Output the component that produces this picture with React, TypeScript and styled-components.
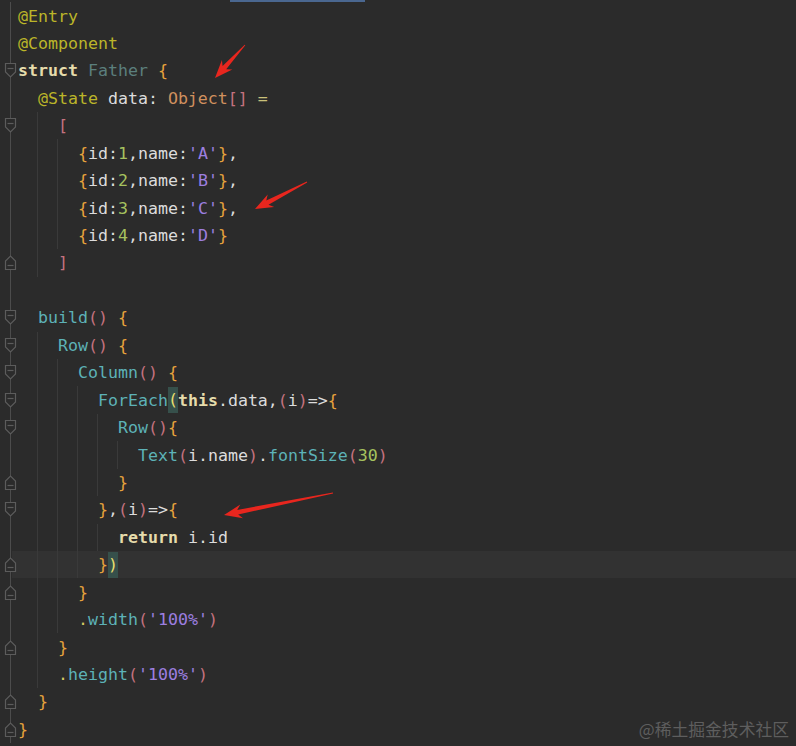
import React from "react";
import styled, { createGlobalStyle, css } from "styled-components";

const Global = createGlobalStyle`
  html, body { margin: 0; padding: 0; background: #2b2b2b; }
  body { overflow: hidden; }
`;

type Kind =
  | "ann" | "kw" | "cls" | "brace" | "plain" | "type" | "bracket"
  | "op" | "num" | "str" | "fn" | "dot" | "paren" | "match";

const colors: Record<Kind, string> = {
  ann: "#bbb529",
  kw: "#e6dcab",
  cls: "#5b7f7d",
  brace: "#e8a33d",
  plain: "#dcdcdc",
  type: "#d0905e",
  bracket: "#c4727f",
  op: "#c9c17a",
  num: "#a6c25f",
  str: "#9d7fe0",
  fn: "#5db2b7",
  dot: "#d6c862",
  paren: "#c4727f",
  match: "#e8df6e",
};

type Tok = [Kind, string];
type Fold = "open" | "close" | null;
interface LineDef { indent: number; toks: Tok[]; fold: Fold; current?: boolean }

const LINES: LineDef[] = [
  { indent: 0, fold: null, toks: [["ann", "@Entry"]] },
  { indent: 0, fold: null, toks: [["ann", "@Component"]] },
  { indent: 0, fold: "open", toks: [["kw", "struct"], ["plain", " "], ["cls", "Father"], ["plain", " "], ["brace", "{"]] },
  { indent: 2, fold: null, toks: [["ann", "@State"], ["plain", " data: "], ["type", "Object"], ["bracket", "[]"], ["plain", " "], ["op", "="]] },
  { indent: 4, fold: "open", toks: [["bracket", "["]] },
  { indent: 6, fold: null, toks: [["brace", "{"], ["plain", "id:"], ["num", "1"], ["plain", ",name:"], ["str", "'A'"], ["brace", "}"], ["plain", ","]] },
  { indent: 6, fold: null, toks: [["brace", "{"], ["plain", "id:"], ["num", "2"], ["plain", ",name:"], ["str", "'B'"], ["brace", "}"], ["plain", ","]] },
  { indent: 6, fold: null, toks: [["brace", "{"], ["plain", "id:"], ["num", "3"], ["plain", ",name:"], ["str", "'C'"], ["brace", "}"], ["plain", ","]] },
  { indent: 6, fold: null, toks: [["brace", "{"], ["plain", "id:"], ["num", "4"], ["plain", ",name:"], ["str", "'D'"], ["brace", "}"]] },
  { indent: 4, fold: "close", toks: [["bracket", "]"]] },
  { indent: 0, fold: null, toks: [] },
  { indent: 2, fold: "open", toks: [["fn", "build"], ["paren", "()"], ["plain", " "], ["brace", "{"]] },
  { indent: 4, fold: "open", toks: [["fn", "Row"], ["paren", "()"], ["plain", " "], ["brace", "{"]] },
  { indent: 6, fold: "open", toks: [["fn", "Column"], ["paren", "()"], ["plain", " "], ["brace", "{"]] },
  { indent: 8, fold: "open", toks: [["fn", "ForEach"], ["match", "("], ["kw", "this"], ["plain", ".data,"], ["paren", "("], ["plain", "i"], ["paren", ")"], ["plain", "=>"], ["brace", "{"]] },
  { indent: 10, fold: "open", toks: [["fn", "Row"], ["paren", "()"], ["brace", "{"]] },
  { indent: 12, fold: null, toks: [["fn", "Text"], ["paren", "("], ["plain", "i.name"], ["paren", ")"], ["plain", "."], ["fn", "fontSize"], ["paren", "("], ["num", "30"], ["paren", ")"]] },
  { indent: 10, fold: "close", toks: [["brace", "}"]] },
  { indent: 8, fold: "open", toks: [["brace", "}"], ["plain", ","], ["paren", "("], ["plain", "i"], ["paren", ")"], ["plain", "=>"], ["brace", "{"]] },
  { indent: 10, fold: null, toks: [["kw", "return"], ["plain", " i.id"]] },
  { indent: 8, fold: "close", current: true, toks: [["brace", "}"], ["match", ")"]] },
  { indent: 6, fold: "close", toks: [["brace", "}"]] },
  { indent: 6, fold: null, toks: [["dot", "."], ["fn", "width"], ["paren", "("], ["str", "'100%'"], ["paren", ")"]] },
  { indent: 4, fold: "close", toks: [["brace", "}"]] },
  { indent: 4, fold: null, toks: [["dot", "."], ["fn", "height"], ["paren", "("], ["str", "'100%'"], ["paren", ")"]] },
  { indent: 2, fold: "close", toks: [["brace", "}"]] },
  { indent: 0, fold: "close", toks: [["brace", "}"]] },
];

const Screen = styled.div`
  position: relative;
  width: 796px;
  height: 746px;
  overflow: hidden;
  background: #2b2b2b;
`;

const TabIndicator = styled.div`
  position: absolute;
  left: 230px;
  top: 0;
  width: 135px;
  height: 2px;
  background: #4a6790;
`;

const Editor = styled.div`
  display: flex;
  flex-direction: column;
  padding-top: 2.3px;
  font-family: "DejaVu Sans Mono", "Liberation Mono", monospace;
  font-size: 16.6px;
`;

const Line = styled.div<{ $current?: boolean }>`
  display: flex;
  height: 27.45px;
  align-items: stretch;
  ${(p) =>
    p.$current &&
    css`
      background: linear-gradient(to right, transparent 12px, #323232 12px);
    `}
`;

const Gutter = styled.div`
  flex: none;
  width: 18px;
  display: flex;
  align-items: center;
  padding-left: 4px;
  box-sizing: border-box;
  background: linear-gradient(#4c4c4c, #4c4c4c) no-repeat 10px 0 / 1px 100%;
`;

const Code = styled.div`
  display: flex;
  align-items: stretch;
  flex: 1;
`;

const IndentUnit = styled.span<{ $guide: boolean }>`
  flex: none;
  width: 20px;
  position: relative;
  ${(p) =>
    p.$guide &&
    css`
      &::before {
        content: "";
        position: absolute;
        left: -1px;
        top: 0;
        bottom: 0;
        width: 1px;
        background: #3a3a3a;
      }
    `}
`;

const Text = styled.span`
  display: flex;
  align-items: center;
  white-space: pre;
`;

const Token = styled.span<{ $kind: Kind }>`
  color: ${(p) => colors[p.$kind]};
  font-weight: ${(p) => (p.$kind === "kw" ? 700 : 400)};
  ${(p) =>
    p.$kind === "match" &&
    css`
      display: inline-block;
      line-height: 26px;
      background: #36504b;
    `}
`;

const Watermark = styled.div`
  position: absolute;
  right: 7px;
  bottom: 5px;
  font-family: "Noto Sans CJK SC", "Noto Sans", sans-serif;
  font-size: 16.8px;
  color: #5e5e5e;
`;

const Overlay = styled.svg`
  position: absolute;
  left: 0;
  top: 0;
  pointer-events: none;
`;

function FoldIcon({ type }: { type: "open" | "close" }) {
  const body =
    type === "open"
      ? "M1.5 1.5 H11.5 V10 L6.5 15 L1.5 10 Z"
      : "M1.5 15.5 H11.5 V7 L6.5 2 L1.5 7 Z";
  const dashY = type === "open" ? 6.5 : 11.5;
  return (
    <svg width="13" height="17" viewBox="0 0 13 17">
      <path d={body} fill="#2b2b2b" stroke="#5c5c5c" strokeWidth="1.2" />
      <path d={`M3.5 ${dashY} H9.5`} stroke="#5c5c5c" strokeWidth="1.2" />
    </svg>
  );
}

function arrowPoints(tx: number, ty: number, px: number, py: number) {
  const dx = px - tx;
  const dy = py - ty;
  const len = Math.hypot(dx, dy);
  const ux = dx / len;
  const uy = dy / len;
  const nx = -uy;
  const ny = ux;
  const headLen = 17;
  const half = 7;
  const bx = px - ux * headLen;
  const by = py - uy * headLen;
  const pts: [number, number][] = [
    [tx + nx * 0.4, ty + ny * 0.4],
    [bx + ux * 3 + nx * 2.4, by + uy * 3 + ny * 2.4],
    [bx - ux * 1 + nx * half, by - uy * 1 + ny * half],
    [px, py],
    [bx - ux * 1 - nx * half, by - uy * 1 - ny * half],
    [bx + ux * 3 - nx * 2.4, by + uy * 3 - ny * 2.4],
    [tx - nx * 0.4, ty - ny * 0.4],
  ];
  return pts.map((p) => `${p[0].toFixed(1)},${p[1].toFixed(1)}`).join(" ");
}

const ARROWS: [number, number, number, number][] = [
  [245, 45, 215, 78],
  [307, 182, 255, 209],
  [333, 493, 224, 515],
];

export default function App() {
  return (
    <>
      <Global />
      <Screen>
        <TabIndicator />
        <Editor>
          {LINES.map((line, i) => {
            const units = Math.floor(line.indent / 2);
            return (
              <Line key={i} $current={line.current}>
                <Gutter>{line.fold && <FoldIcon type={line.fold} />}</Gutter>
                <Code>
                  {Array.from({ length: units }).map((_, u) => (
                    <IndentUnit key={u} $guide={u > 0} />
                  ))}
                  <Text>
                    {line.toks.map(([k, t], j) => (
                      <Token key={j} $kind={k}>
                        {t}
                      </Token>
                    ))}
                  </Text>
                </Code>
              </Line>
            );
          })}
        </Editor>
        <Overlay width="796" height="746" viewBox="0 0 796 746">
          {ARROWS.map((a, i) => (
            <polygon key={i} points={arrowPoints(a[0], a[1], a[2], a[3])} fill="#e8261e" />
          ))}
        </Overlay>
        <Watermark>@稀土掘金技术社区</Watermark>
      </Screen>
    </>
  );
}
